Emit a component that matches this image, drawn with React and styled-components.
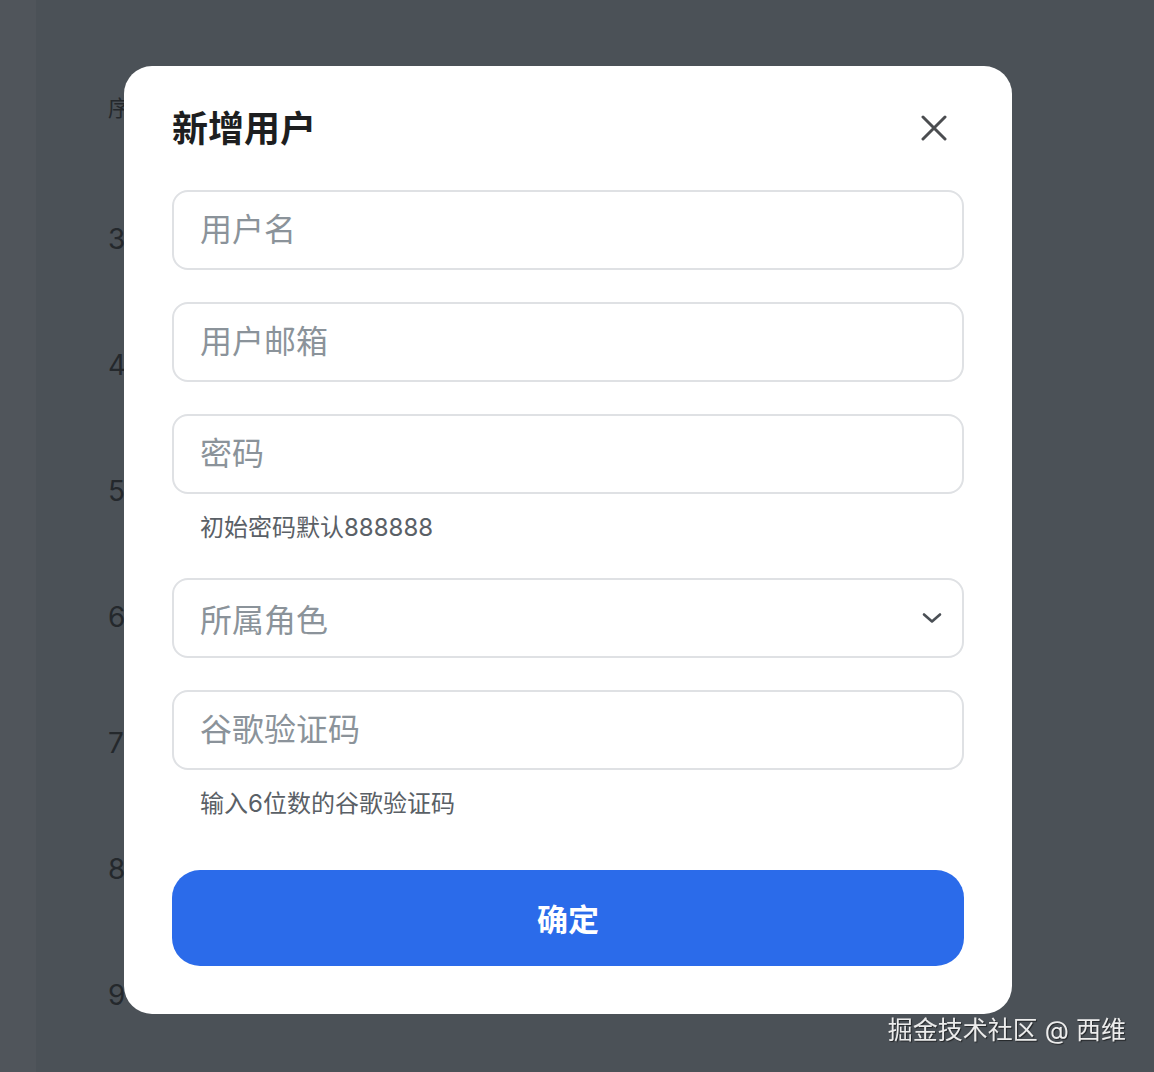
import React from "react";
import styled, { createGlobalStyle } from "styled-components";

const GlobalStyle = createGlobalStyle`
  html, body { margin: 0; padding: 0; }
  body {
    font-family: Inter, "Noto Sans CJK SC", sans-serif;
    background: #4b5157;
    width: 1154px;
    height: 1072px;
    overflow: hidden;
  }
  * { box-sizing: border-box; }
`;

const FONT = `Inter, "Noto Sans CJK SC", sans-serif`;

const Page = styled.div`
  display: flex;
  width: 1154px;
  height: 1072px;
  background: #4b5157;
`;

const SideStrip = styled.div`
  width: 36px;
  flex-shrink: 0;
  background: #50555b;
`;

const Table = styled.div`
  display: flex;
  flex-direction: column;
  padding: 36px 0 0 72px;
`;

const Cell = styled.div`
  height: ${(p) => (p.$head ? 140 : 126)}px;
  display: flex;
  align-items: center;
  font-size: ${(p) => (p.$head ? 22 : 28)}px;
  color: #24282c;
  font-family: ${FONT};
`;

const Overlay = styled.div`
  position: fixed;
  inset: 0;
  padding: 66px 0 0 124px;
  display: flex;
  align-items: flex-start;
`;

const Modal = styled.div`
  width: 888px;
  background: #ffffff;
  border-radius: 28px;
  padding: 40px 48px 48px;
  display: flex;
  flex-direction: column;
`;

const Header = styled.div`
  height: 44px;
  display: flex;
  align-items: center;
  justify-content: space-between;
  margin-bottom: 40px;
`;

const Title = styled.h2`
  margin: 0;
  font-family: ${FONT};
  font-size: 36px;
  font-weight: 700;
  color: #1d1e20;
  line-height: 44px;
  padding-top: 2px;
`;

const CloseBtn = styled.button`
  width: 40px;
  height: 40px;
  margin-right: 10px;
  border: none;
  background: none;
  padding: 0;
  display: flex;
  align-items: center;
  justify-content: center;
  cursor: pointer;
`;

const Form = styled.div`
  display: flex;
  flex-direction: column;
  gap: 32px;
`;

const Field = styled.div`
  display: flex;
  flex-direction: column;
`;

const Input = styled.input`
  height: 80px;
  width: 100%;
  border: 2px solid #dfe1e4;
  border-radius: 16px;
  padding: 0 26px 1px;
  font-family: ${FONT};
  font-size: 32px;
  color: #1d1e20;
  outline: none;
  background: #fff;
  &::placeholder {
    color: #8b939a;
  }
`;

const SelectBox = styled.div`
  height: 80px;
  border: 2px solid #dfe1e4;
  border-radius: 16px;
  padding: 0 20px 0 26px;
  display: flex;
  align-items: center;
  justify-content: space-between;
  font-family: ${FONT};
  font-size: 32px;
  color: #8b939a;
`;

const SelectText = styled.span`
  padding-bottom: 1px;
`;

const Help = styled.div`
  padding: 16px 0 0 28px;
  line-height: 36px;
  font-family: ${FONT};
  font-size: 24px;
  color: #5a6066;
`;

const Submit = styled.button`
  margin-top: 48px;
  height: 96px;
  border: none;
  border-radius: 28px;
  background: #2b6bea;
  color: #ffffff;
  font-family: ${FONT};
  font-size: 31px;
  font-weight: 600;
  padding-bottom: 2px;
  cursor: pointer;
`;

const Watermark = styled.div`
  position: fixed;
  right: 28px;
  bottom: 26px;
  font-size: 25px;
  color: #ececec;
  text-shadow: 1px 1px 1px rgba(0, 0, 0, 0.55);
  font-family: ${FONT};
`;

const CloseIcon = () => (
  <svg width="26" height="26" viewBox="0 0 26 26">
    <path d="M2 2 L24 24 M24 2 L2 24" stroke="#4b4d50" strokeWidth="3" strokeLinecap="round" fill="none" />
  </svg>
);

const Chevron = () => (
  <svg width="20" height="12" viewBox="0 0 20 12">
    <path d="M2 2.5 L10 9.5 L18 2.5" stroke="#4a4f55" strokeWidth="2.6" strokeLinecap="round" strokeLinejoin="round" fill="none" />
  </svg>
);

export default function App() {
  return (
    <>
      <GlobalStyle />
      <Page>
        <SideStrip />
        <Table>
          <Cell $head>序</Cell>
          {[3, 4, 5, 6, 7, 8, 9].map((n) => (
            <Cell key={n}>{n}</Cell>
          ))}
        </Table>
      </Page>
      <Overlay>
        <Modal>
          <Header>
            <Title>新增用户</Title>
            <CloseBtn aria-label="关闭">
              <CloseIcon />
            </CloseBtn>
          </Header>
          <Form>
            <Input placeholder="用户名" />
            <Input placeholder="用户邮箱" />
            <Field>
              <Input placeholder="密码" type="password" />
              <Help>初始密码默认888888</Help>
            </Field>
            <SelectBox>
              <SelectText>所属角色</SelectText>
              <Chevron />
            </SelectBox>
            <Field>
              <Input placeholder="谷歌验证码" />
              <Help>输入6位数的谷歌验证码</Help>
            </Field>
          </Form>
          <Submit>确定</Submit>
        </Modal>
      </Overlay>
      <Watermark>掘金技术社区 @ 西维</Watermark>
    </>
  );
}
